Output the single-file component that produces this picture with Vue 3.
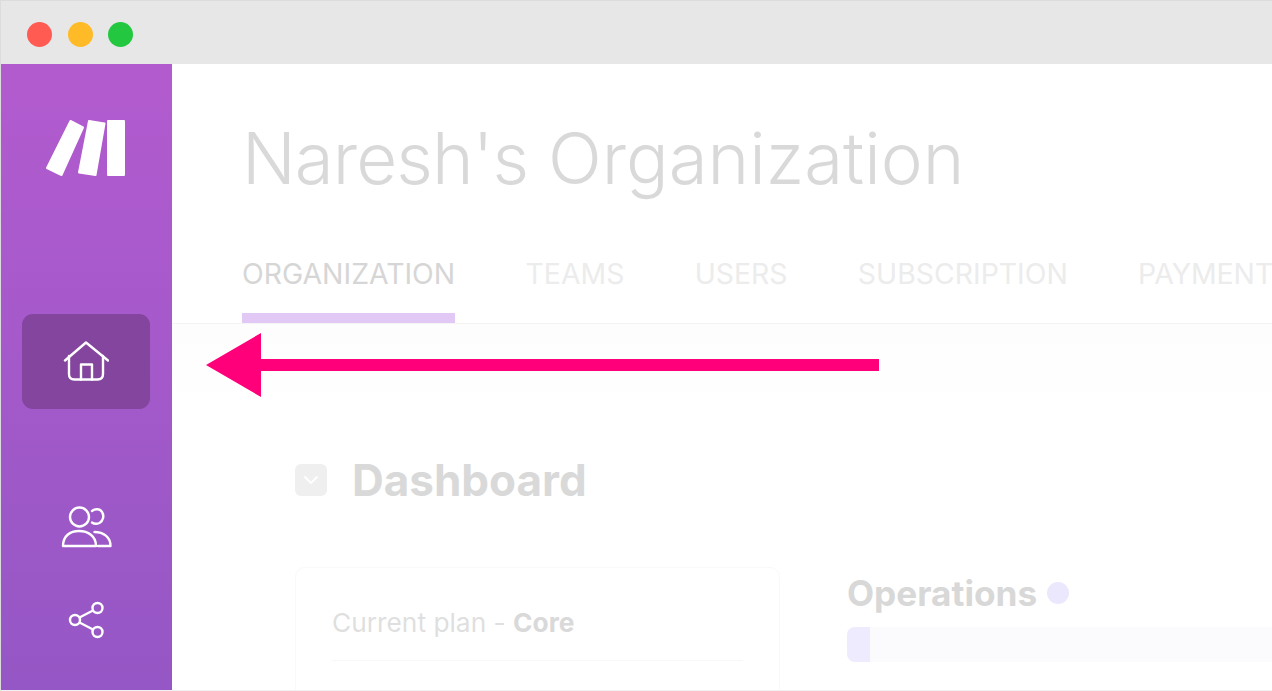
<template>
  <div class="window">
    <div class="titlebar">
      <span class="light red"></span>
      <span class="light yellow"></span>
      <span class="light green"></span>
    </div>
    <div class="body">
      <aside class="sidebar">
        <svg class="logo" width="82" height="60" viewBox="0 0 82 60" fill="#fff" stroke="#fff" stroke-width="2" stroke-linejoin="round">
          <polygon points="25.500,2 38,8.500 16.500,56 2,49" />
          <polygon points="44,2 59.500,4.500 50.500,56 34,53.500" />
          <polygon points="63,2 79,2 79,56 63,56" />
        </svg>
        <div class="nav-active">
          <svg width="46" height="42" viewBox="0 0 46 42" fill="none" stroke="#fff" stroke-width="2.400" stroke-linecap="round" stroke-linejoin="round">
            <path d="M2 19.500 L23 1.500 L45 19.500" />
            <path d="M6 15 V33 Q6 38.500 11.500 38.500 H34.500 Q40 38.500 40 33 V15" />
            <path d="M18 38.500 V23.500 H29 V38.500" />
          </svg>
        </div>
        <svg class="nav-users" width="52" height="42" viewBox="0 0 52 42" fill="none" stroke="#fff" stroke-width="2.400" stroke-linecap="round" stroke-linejoin="round">
          <circle cx="18.500" cy="11" r="9.500" />
          <path d="M2 40 C2 30 9 25 18 25 C27 25 35 30 35 40 Z" />
          <path d="M31 5 C34 2.500 39 2.500 41 6 C43.500 10 42 15 38.500 17 C36 18 33 18 31 16.500" />
          <path d="M33.500 26 C42.500 26 49.500 31 49.500 40 H37" />
        </svg>
        <svg class="nav-share" width="38" height="38" viewBox="0 0 38 38" fill="none" stroke="#fff" stroke-width="2.400">
          <circle cx="29.500" cy="7" r="5" />
          <circle cx="7" cy="19" r="5" />
          <circle cx="29.500" cy="31" r="5" />
          <path d="M11.500 16.500 L25 9.500 M11.500 21.500 L25 28.500" />
        </svg>
      </aside>
      <main class="main">
        <h1 class="org-title"><span class="org-name">Naresh's</span> Organization</h1>
        <nav class="tabs">
          <a v-for="(tab, i) in tabs" :key="tab" class="tab" :class="{ active: i === 0 }">{{ tab }}</a>
        </nav>
        <div class="content">
          <div class="dash-head">
            <span class="dash-icon">
              <svg width="16" height="10" viewBox="0 0 16 10" fill="none" stroke="#fff" stroke-width="1.800" stroke-linecap="round" stroke-linejoin="round">
                <path d="M2 2 L8 8 L14 2" />
              </svg>
            </span>
            <h2>Dashboard</h2>
          </div>
          <div class="columns">
            <section class="plan-card">
              <p class="plan">Current plan - <strong>Core</strong></p>
              <div class="plan-line"></div>
            </section>
            <section class="ops">
              <div class="ops-title"><strong>Operations</strong><span class="dot"></span></div>
              <div class="bar"><div class="bar-fill" :style="{ width: usage + 'px' }"></div></div>
            </section>
          </div>
        </div>
      </main>
    </div>
    <svg class="arrow" width="673" height="64" viewBox="0 0 673 64">
      <path d="M0 32 L55 0 V26 H673 V38 H55 V64 Z" fill="#ff007a" />
    </svg>
  </div>
</template>

<script setup>
const tabs = ['ORGANIZATION', 'TEAMS', 'USERS', 'SUBSCRIPTION', 'PAYMENTS']
const usage = 23
</script>

<style>
html,
body {
  margin: 0;
  overflow: hidden;
  background: #fff;
}
</style>

<style scoped>
.window {
  position: relative;
  width: 1272px;
  height: 691px;
  box-sizing: border-box;
  border-left: 1px solid #dcdcdc;
  border-top: 1px solid #dcdcdc;
  border-bottom: 1px solid #f1f1f1;
  display: flex;
  flex-direction: column;
  overflow: hidden;
  font-family: Inter, 'Liberation Sans', sans-serif;
}

.titlebar {
  height: 63px;
  flex: none;
  background: #e7e7e7;
  display: flex;
  align-items: center;
  gap: 15.500px;
  padding-left: 26px;
  padding-top: 3px;
  box-sizing: border-box;
}

.light {
  width: 25px;
  height: 25px;
  border-radius: 50%;
}

.red { background: #ff5b52; }
.yellow { background: #ffbb27; }
.green { background: #24c840; }

.body {
  flex: 1;
  display: flex;
  min-height: 0;
}

.sidebar {
  width: 171px;
  flex: none;
  box-sizing: border-box;
  background: linear-gradient(180deg, #b25bcf 0%, #9557c5 100%);
  padding: 55px 21px 0;
  display: flex;
  flex-direction: column;
  align-items: center;
}

.logo {
  margin-right: 1px;
  flex: none;
}

.nav-active {
  width: 128px;
  height: 95px;
  margin-top: 135px;
  margin-right: 1px;
  border-radius: 11px;
  background: #83459d;
  display: flex;
  align-items: center;
  justify-content: center;
  flex: none;
}

.nav-users {
  margin-top: 97px;
  flex: none;
}

.nav-share {
  margin-top: 53px;
  flex: none;
}

.main {
  flex: 1;
  min-width: 0;
  overflow: hidden;
  background: #fff;
}

.org-title {
  margin: 52px 0 0 70px;
  font-size: 70.800px;
  line-height: 84px;
  font-weight: 300;
  color: #d9d9d9;
  white-space: nowrap;
}

.org-name {
  letter-spacing: -0.900px;
}

.tabs {
  margin-top: 56px;
  padding-left: 70px;
  height: 67px;
  display: flex;
  gap: 70.300px;
  border-bottom: 1px solid #f4f4f4;
  white-space: nowrap;
}

.tab {
  height: 67px;
  box-sizing: border-box;
  font-size: 28.400px;
  line-height: 36px;
  font-weight: 400;
  color: #ececec;
}

.tab.active {
  color: #d6d6d6;
  border-bottom: 10px solid #e2c8f5;
}

.content {
  padding: 0 0 0 123px;
  background: linear-gradient(180deg, #fdfdfe 0, #fff 90px);
}

.dash-head {
  display: flex;
  align-items: center;
  gap: 25px;
  padding-top: 131px;
  height: 50px;
}

.dash-icon {
  width: 32px;
  height: 32px;
  border-radius: 6px;
  background: #efefef;
  display: flex;
  align-items: center;
  justify-content: center;
}

.dash-head h2 {
  margin: 0;
  font-size: 44px;
  line-height: 50px;
  font-weight: 700;
  color: #d9d9d9;
}

.columns {
  display: flex;
  gap: 67px;
  margin-top: 62px;
}

.plan-card {
  width: 485px;
  height: 200px;
  box-sizing: border-box;
  flex: none;
  border: 1px solid #f9f9f9;
  border-radius: 10px;
  padding: 38px 36px 0 36px;
}

.plan {
  margin: 0;
  font-size: 26.300px;
  line-height: 34px;
  color: #dfdfdf;
}

.plan strong {
  font-weight: 700;
  color: #d9d9d9;
}

.plan-line {
  margin-top: 20px;
  height: 1px;
  background: #f8f8f8;
}

.ops {
  flex: 1;
}

.ops-title {
  display: flex;
  align-items: center;
  gap: 10px;
  height: 44px;
  margin-top: 4px;
  font-size: 35.200px;
  color: #d8d8d8;
}

.dot {
  width: 22px;
  height: 22px;
  border-radius: 50%;
  background: #ebe8fe;
}

.bar {
  height: 35px;
  margin-top: 12px;
  background: #fbfbfd;
  border-radius: 8px 0 0 8px;
  overflow: hidden;
}

.bar-fill {
  height: 100%;
  background: #eeebfe;
}

.arrow {
  position: absolute;
  left: 205px;
  top: 332px;
}
</style>
